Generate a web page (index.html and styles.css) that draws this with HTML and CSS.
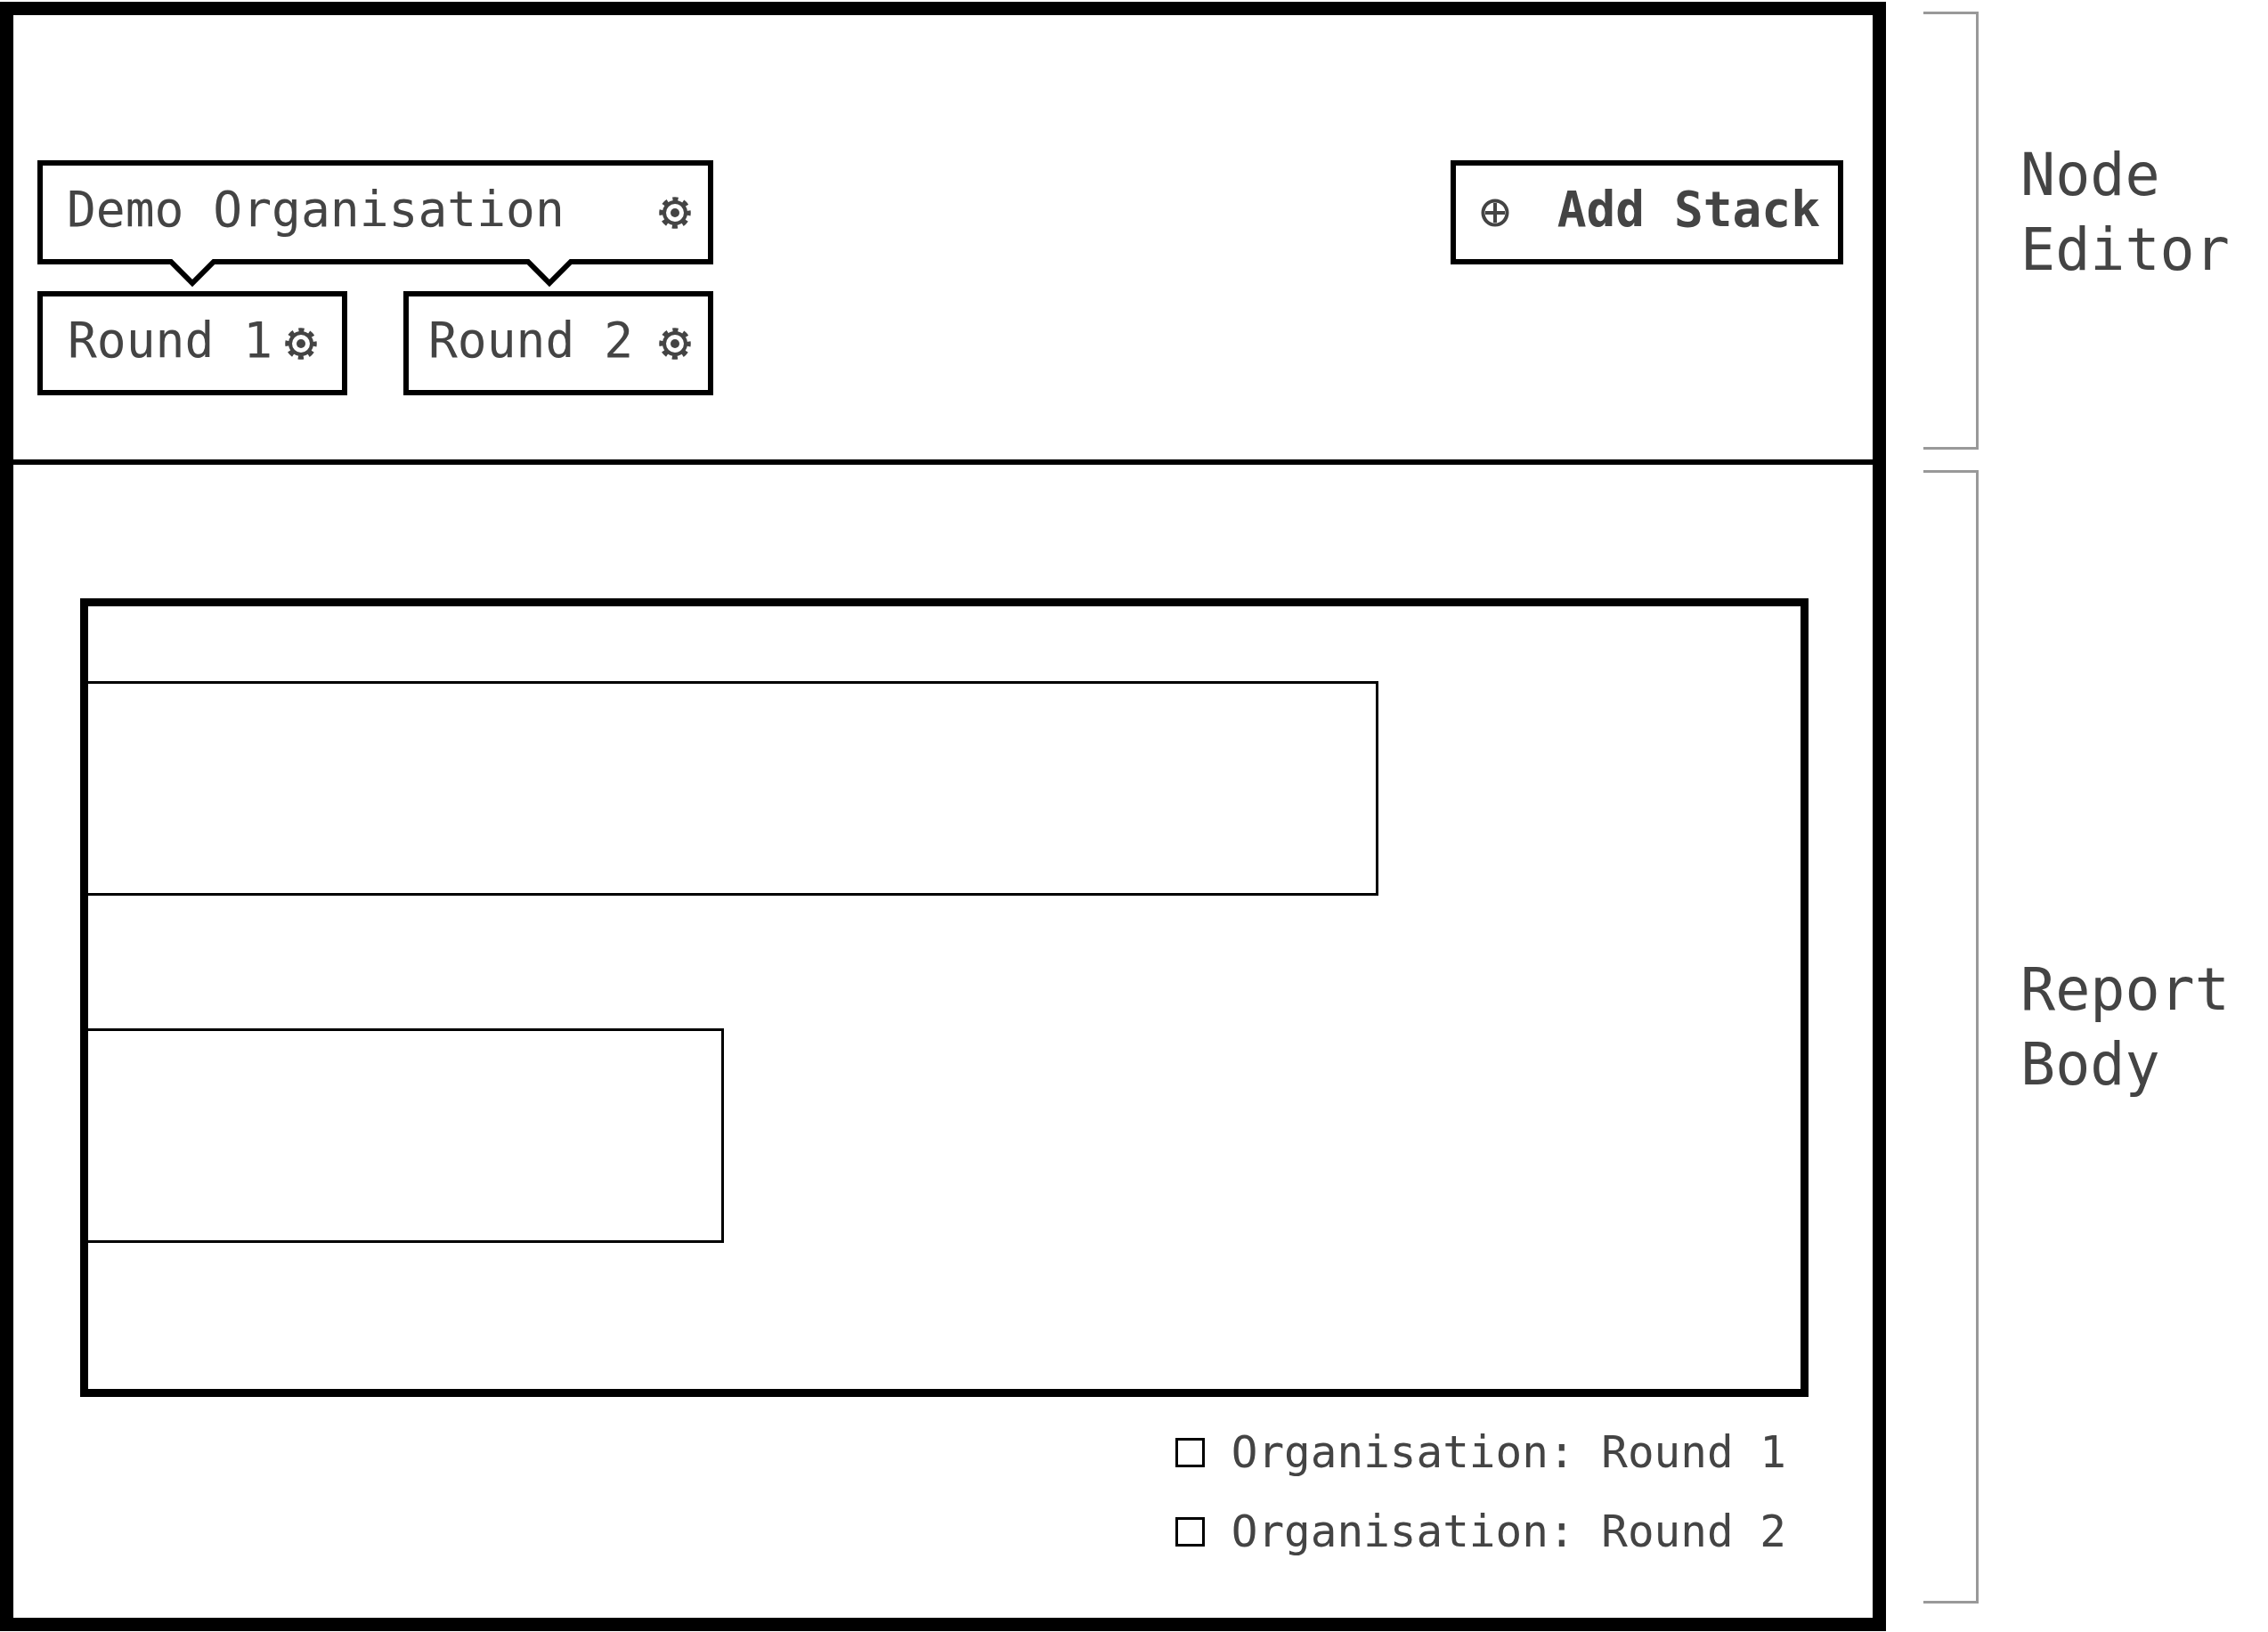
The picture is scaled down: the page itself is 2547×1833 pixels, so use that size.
FILE: index.html
```html
<!DOCTYPE html>
<html lang="en">
<head>
    <meta charset="UTF-8">
    <meta name="viewport" content="width=device-width, initial-scale=1.0">
    <title>Report Layout</title>
    <link rel="stylesheet" href="styles.css">
</head>
<body>
    <svg class="defs" width="0" height="0" aria-hidden="true">
        <symbol id="gear" viewBox="0 0 36 36">
            <circle cx="18" cy="18" r="12" fill="none" stroke="#444" stroke-width="4"/>
            <circle cx="18" cy="18" r="15.5" fill="none" stroke="#444" stroke-width="4.5" stroke-dasharray="6.2 5.97" stroke-dashoffset="3.1"/>
            <circle cx="18" cy="18" r="5" fill="#444"/>
        </symbol>
        <symbol id="notch" viewBox="0 0 60 36">
            <path d="M3 0H57L30 27Z" fill="#fff"/>
            <path d="M0 3H6L30 27L54 3H60" fill="none" stroke="#000" stroke-width="6"/>
        </symbol>
    </svg>

    <div class="frame">
        <section class="editor">
            <div class="stack">
                <div class="node org">
                    <span>Demo Organisation</span>
                    <svg class="gear"><use href="#gear"/></svg>
                    <svg class="notch notch-left"><use href="#notch"/></svg>
                    <svg class="notch notch-right"><use href="#notch"/></svg>
                </div>
                <div class="rounds">
                    <div class="node round-first">
                        <span>Round 1</span>
                        <svg class="gear"><use href="#gear"/></svg>
                    </div>
                    <div class="node round-second">
                        <span>Round 2</span>
                        <svg class="gear"><use href="#gear"/></svg>
                    </div>
                </div>
            </div>
            <button class="add-stack" type="button">
                <svg class="plus" viewBox="0 0 32 32">
                    <circle cx="16" cy="16" r="13.5" fill="none" stroke="#444" stroke-width="4"/>
                    <path d="M16 5V27M5 16H27" stroke="#444" stroke-width="4"/>
                </svg>
                <span>Add Stack</span>
            </button>
        </section>

        <section class="report">
            <div class="chart">
                <div class="bar" style="width: 1449px"></div>
                <div class="bar" style="width: 714px"></div>
            </div>
            <ul class="legend">
                <li><i class="swatch"></i>Organisation: Round 1</li>
                <li><i class="swatch"></i>Organisation: Round 2</li>
            </ul>
        </section>
    </div>

    <aside class="notes">
        <div class="note note-editor">
            <div class="bracket"></div>
            <div class="note-label">Node<br>Editor</div>
        </div>
        <div class="note note-report">
            <div class="bracket"></div>
            <div class="note-label">Report<br>Body</div>
        </div>
    </aside>
</body>
</html>
```

FILE: styles.css
```css
html, body {
    height: 100%;
}

body {
    margin: 0;
    padding-top: 2px;
    box-sizing: border-box;
    display: flex;
    align-items: flex-start;
    background-color: #fff;
    color: #444;
    font-family: 'DejaVu Sans Mono', monospace;
    overflow: hidden;
}

.defs {
    position: absolute;
}

.frame {
    width: 2118px;
    height: 1830px;
    flex: none;
    box-sizing: border-box;
    border: 15px solid #000;
    display: flex;
    flex-direction: column;
}

/* Node editor */
.editor {
    height: 505px;
    flex: none;
    box-sizing: border-box;
    padding: 163px 33px 0 27px;
    border-bottom: 6px solid #000;
    display: flex;
    justify-content: space-between;
    align-items: flex-start;
}

.stack {
    width: 759px;
}

.node {
    position: relative;
    height: 117px;
    box-sizing: border-box;
    padding: 0 19px 8px 27px;
    border: 6px solid #000;
    background-color: #fff;
    display: flex;
    justify-content: space-between;
    align-items: center;
    font-size: 54.6px;
}

.round-first {
    padding-left: 28px;
    padding-right: 28px;
}

.round-second {
    padding-left: 22px;
}

.rounds {
    margin-top: 30px;
    display: grid;
    grid-template-columns: 348px 348px;
    justify-content: space-between;
}

.gear {
    width: 36px;
    height: 36px;
    flex: none;
    margin-top: 8px;
}

.notch {
    position: absolute;
    top: 105px;
    width: 60px;
    height: 36px;
}

.notch-left {
    left: 138px;
}

.notch-right {
    left: 539px;
}

.add-stack {
    width: 441px;
    height: 117px;
    box-sizing: border-box;
    padding: 0 20px 8px 28px;
    border: 6px solid #000;
    background-color: #fff;
    color: #444;
    display: flex;
    justify-content: space-between;
    align-items: center;
    font-family: inherit;
    font-size: 54.5px;
    font-weight: bold;
}

.plus {
    width: 32px;
    height: 32px;
    margin-top: 8px;
}

/* Report body */
.report {
    flex: 1;
    box-sizing: border-box;
    padding: 150px 72px 0 75px;
}

.chart {
    height: 897px;
    box-sizing: border-box;
    padding-top: 84px;
    border: 9px solid #000;
    display: flex;
    flex-direction: column;
    gap: 149px;
}

.bar {
    height: 241px;
    box-sizing: border-box;
    border: 3px solid #000;
    border-left: none;
}

.legend {
    list-style: none;
    margin: 32px 25px 0 0;
    padding: 0;
    display: flex;
    flex-direction: column;
    align-items: flex-end;
    gap: 29px;
    font-size: 49.3px;
    line-height: 60px;
}

.legend li {
    display: flex;
    align-items: center;
}

.swatch {
    width: 33px;
    height: 33px;
    box-sizing: border-box;
    margin-right: 30px;
    border: 3px solid #000;
}

/* Annotations to the right of the frame */
.notes {
    margin-left: 42px;
    padding-top: 11px;
    display: flex;
    flex-direction: column;
    gap: 23px;
}

.note {
    display: flex;
    align-items: flex-start;
}

.note-editor {
    height: 492px;
}

.note-report {
    height: 1273px;
}

.bracket {
    width: 62px;
    height: 100%;
    flex: none;
    box-sizing: border-box;
    border: 3px solid #999;
    border-left: none;
}

.note-label {
    margin-left: 47px;
    font-size: 65px;
    line-height: 84px;
}

.note-editor .note-label {
    margin-top: 142px;
}

.note-report .note-label {
    margin-top: 542px;
}
```
